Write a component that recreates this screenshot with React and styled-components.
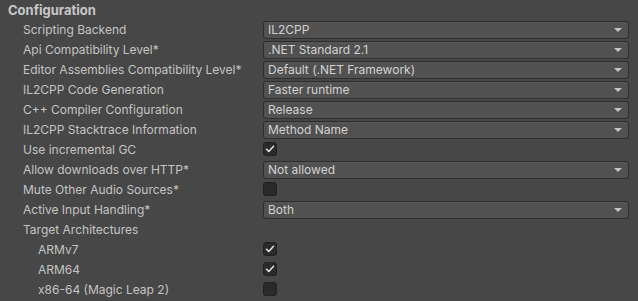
import React from 'react';
import styled, { createGlobalStyle } from 'styled-components';

const GlobalStyle = createGlobalStyle`
    html, body {
        margin: 0;
        padding: 0;
        background: #474747;
    }
    body {
        font-family: 'Inter', 'Noto Sans', sans-serif;
        -webkit-font-smoothing: antialiased;
    }
`;

const Panel = styled.div`
    width: 638px;
    height: 301px;
    overflow: hidden;
    box-sizing: border-box;
    padding: 0 9px 0 8px;
    background: #474747;
`;

const Title = styled.div`
    height: 19px;
    line-height: 21px;
    font-size: 13px;
    font-weight: 700;
    color: #c8c8c8;
`;

const Row = styled.div`
    display: grid;
    grid-template-columns: 255px 1fr;
    align-items: center;
    height: 20px;
`;

const Label = styled.div`
    padding-left: ${(p) => (p.$level === 2 ? 30 : 15)}px;
    font-size: 12px;
    color: #c4c4c4;
    white-space: nowrap;
`;

const Dropdown = styled.div`
    position: relative;
    height: 18px;
    box-sizing: border-box;
    margin-top: 1px;
    padding-left: 4px;
    display: flex;
    align-items: center;
    justify-content: space-between;
    background: #515151;
    border: 1px solid #303030;
    border-top-color: #2a2a2a;
    border-radius: 3px;
    box-shadow: inset 0 1px 0 #585858;
    font-size: 12px;
    color: #d2d2d2;
`;

const Arrow = styled.span`
    width: 0;
    height: 0;
    margin-right: 6px;
    border-left: 4px solid transparent;
    border-right: 4px solid transparent;
    border-top: 4px solid #c4c4c4;
`;

const Box = styled.div`
    width: 14px;
    height: 14px;
    box-sizing: border-box;
    background: #2a2a2a;
    border: 1px solid #212121;
    border-radius: 3px;
    display: flex;
    align-items: center;
    justify-content: center;
`;

function Select({ value }) {
    return (
        <Dropdown>
            <span>{value}</span>
            <Arrow />
        </Dropdown>
    );
}

function Check({ on }) {
    return (
        <Box>
            {on && (
                <svg width="10" height="10" viewBox="0 0 10 10">
                    <path d="M1.5 5.2 L3.8 7.4 L8.5 2.3" fill="none" stroke="#e4e4e4" strokeWidth="1.5" strokeLinecap="round" strokeLinejoin="round" />
                </svg>
            )}
        </Box>
    );
}

const rows = [
    { label: 'Scripting Backend', select: 'IL2CPP' },
    { label: 'Api Compatibility Level*', select: '.NET Standard 2.1' },
    { label: 'Editor Assemblies Compatibility Level*', select: 'Default (.NET Framework)' },
    { label: 'IL2CPP Code Generation', select: 'Faster runtime' },
    { label: 'C++ Compiler Configuration', select: 'Release' },
    { label: 'IL2CPP Stacktrace Information', select: 'Method Name' },
    { label: 'Use incremental GC', check: true },
    { label: 'Allow downloads over HTTP*', select: 'Not allowed' },
    { label: 'Mute Other Audio Sources*', check: false },
    { label: 'Active Input Handling*', select: 'Both' },
    { label: 'Target Architectures' },
    { label: 'ARMv7', check: true, level: 2 },
    { label: 'ARM64', check: true, level: 2 },
    { label: 'x86-64 (Magic Leap 2)', check: false, level: 2 },
];

export default function App() {
    return (
        <>
            <GlobalStyle />
            <Panel>
                <Title>Configuration</Title>
                {rows.map((r) => (
                    <Row key={r.label}>
                        <Label $level={r.level}>{r.label}</Label>
                        <div>
                            {r.select && <Select value={r.select} />}
                            {r.check !== undefined && <Check on={r.check} />}
                        </div>
                    </Row>
                ))}
            </Panel>
        </>
    );
}
